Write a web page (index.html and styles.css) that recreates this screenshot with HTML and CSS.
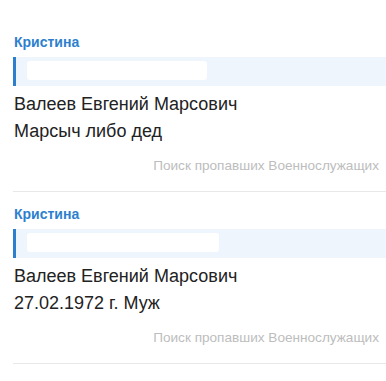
FILE: index.html
```html
<!DOCTYPE html>
<html lang="ru">
<head>
    <meta charset="UTF-8">
    <title>Сообщения</title>
    <link rel="stylesheet" href="styles.css">
</head>
<body>
    <div class="feed">
        <div class="post">
            <div class="author">Кристина</div>
            <div class="quote"><span class="blur"></span></div>
            <div class="text">Валеев Евгений Марсович<br>Марсыч либо дед</div>
            <div class="source">Поиск пропавших Военнослужащих</div>
        </div>
        <div class="post">
            <div class="author">Кристина</div>
            <div class="quote"><span class="blur wide"></span></div>
            <div class="text">Валеев Евгений Марсович<br>27.02.1972 г. Муж</div>
            <div class="source">Поиск пропавших Военнослужащих</div>
        </div>
    </div>
</body>
</html>
```

FILE: styles.css
```css
body {
    margin: 0;
    background: #fff;
    font-family: "Liberation Sans", Arial, sans-serif;
    color: #222;
}

.feed {
    padding-top: 34px;
}

.post {
    margin-left: 13px;
    border-bottom: 1px solid #e8e8e8;
    margin-bottom: 14px;
}

.author {
    font-size: 14px;
    font-weight: bold;
    color: #2d7fce;
    padding-left: 1px;
    line-height: 16px;
}

.quote {
    margin-top: 7px;
    height: 29px;
    background: #eef5fc;
    border-left: 3px solid #2d7fce;
    padding: 4px 0 0 11px;
    box-sizing: border-box;
}

.blur {
    display: block;
    width: 180px;
    height: 19px;
    background: #fff;
    border-radius: 3px;
}

.blur.wide {
    width: 192px;
}

.text {
    font-size: 18px;
    line-height: 27px;
    padding: 5px 0 0 1px;
}

.source {
    text-align: right;
    font-size: 13.6px;
    color: #bdbdbd;
    padding: 13px 7px 18px 0;
}
```
